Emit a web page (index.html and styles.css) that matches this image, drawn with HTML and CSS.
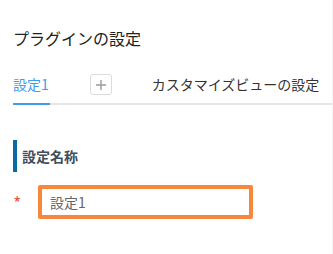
FILE: index.html
```html
<!DOCTYPE html>
<html lang="ja">
  <head>
    <meta charset="UTF-8" />
    <meta name="viewport" content="width=device-width, initial-scale=1.0" />
    <title>プラグインの設定</title>
    <link rel="stylesheet" href="styles.css">
  </head>
  <body>
    <div class="page">
      <h1 class="title">プラグインの設定</h1>

      <div class="tabs">
        <div class="tab active">設定1</div>
        <button class="add" type="button" aria-label="追加">
          <svg width="10" height="10" viewBox="0 0 10 10">
            <path d="M5 0v10M0 5h10" stroke="#9a9a9a" stroke-width="1.4" />
          </svg>
        </button>
        <div class="tab">カスタマイズビューの設定</div>
      </div>

      <div class="field">
        <h2 class="label">設定名称</h2>
        <div class="row">
          <span class="req">*</span>
          <input class="text" type="text" value="設定1" />
        </div>
      </div>
    </div>
  </body>
</html>
```

FILE: styles.css
```css
html,
body {
  margin: 0;
  height: 100%;
  background: #fff;
}
body {
  font-family: "Noto Sans CJK JP", "Noto Sans", sans-serif;
  color: #333;
}
.page {
  height: 100%;
  box-sizing: border-box;
  padding: 26px 0 0 13px;
  border-right: 1px solid #f3f3f3;
  overflow: hidden;
}
.title {
  margin: 0;
  font-size: 16px;
  font-weight: normal;
  line-height: 24px;
  color: #222;
}

.tabs {
  display: flex;
  align-items: flex-start;
  gap: 40px;
  margin-top: 24px;
  border-bottom: 2px solid #e3e7eb;
  white-space: nowrap;
}
.tab {
  font-size: 14px;
  line-height: 20px;
  padding-bottom: 9px;
  margin-bottom: -2px;
  border-bottom: 2px solid transparent;
  color: #333;
}
.tab.active {
  color: #3d9cf0;
  border-bottom-color: #3d9cf0;
  padding-right: 1px;
}
.add {
  width: 22px;
  height: 21px;
  padding: 0;
  margin: 0;
  display: flex;
  align-items: center;
  justify-content: center;
  background: #fff;
  border: 1px solid #dcdcdc;
  border-radius: 3px;
}

.field {
  margin-top: 35px;
}
.label {
  margin: 0;
  font-size: 14px;
  font-weight: bold;
  line-height: 32px;
  padding-left: 5px;
  border-left: 4px solid #0b6aa2;
  color: #3f4d5e;
}
.row {
  display: flex;
  align-items: center;
  margin-top: 13px;
}
.req {
  width: 25px;
  color: #e8594b;
  font-size: 18px;
  line-height: 18px;
  margin-top: -1px;
}
.text {
  width: 215px;
  height: 34px;
  box-sizing: border-box;
  border: 4px solid #f8873e;
  border-radius: 2px;
  padding: 0 8px;
  font-family: inherit;
  font-size: 14px;
  color: #666;
  outline: none;
}
```
